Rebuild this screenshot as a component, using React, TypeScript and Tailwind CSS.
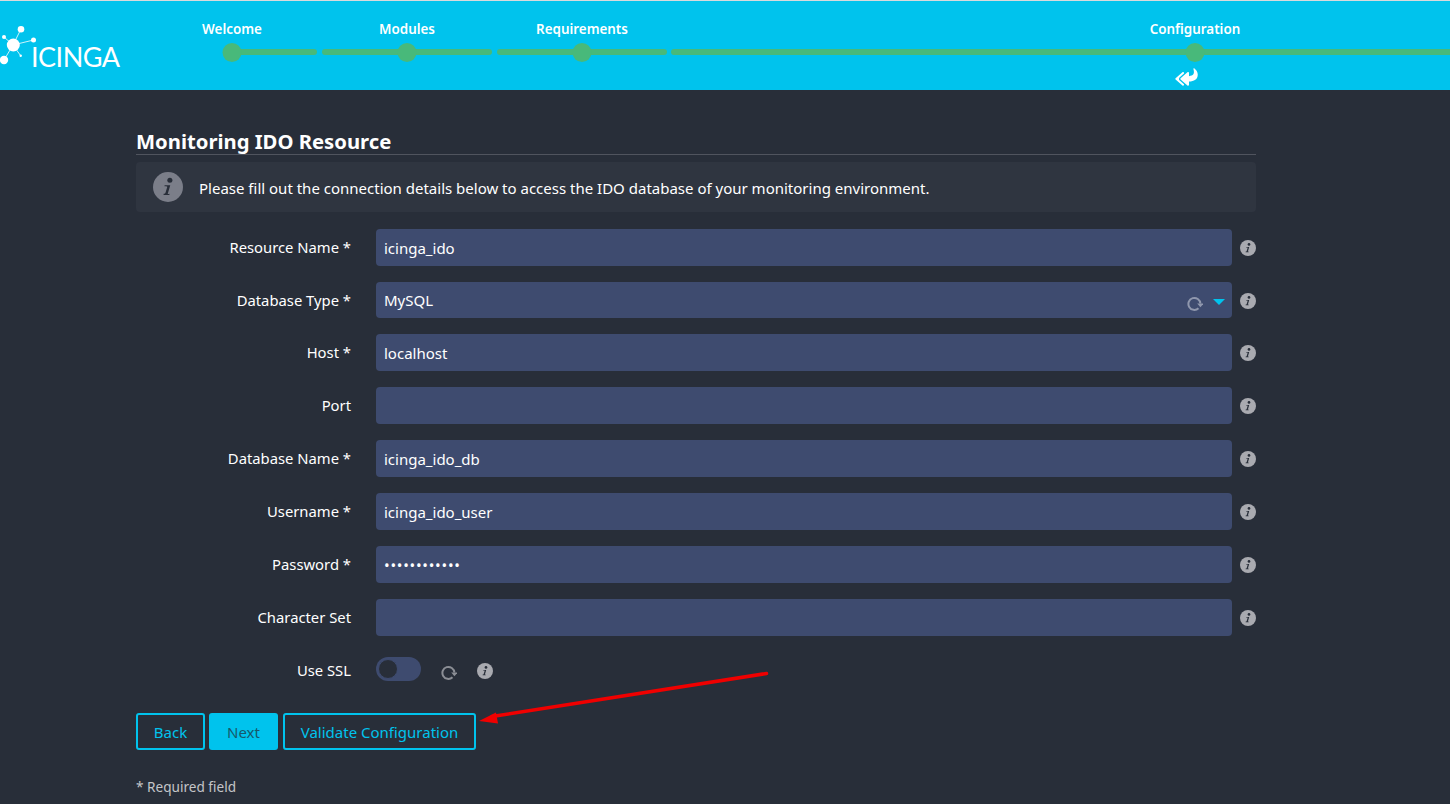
import { FaReplyAll } from "react-icons/fa"

const font = { fontFamily: '"Noto Sans", "Open Sans", sans-serif' }

function InfoIcon({ className = "w-4 h-4" }: { className?: string }) {
  return (
    <svg viewBox="0 0 16 16" className={className}>
      <circle cx="8" cy="8" r="8" fill="currentColor" />
      <circle cx="9" cy="4.4" r="1.35" fill="#282e39" />
      <path d="M6.2 7.1h3l-1.3 4.3c-.1.3.1.4.9.2l-.1.7H5.6l.1-.7c.6 0 .8-.1.9-.4l1-3.2c.1-.3-.1-.4-1.500-.4z" fill="#282e39" />
    </svg>
  )
}

function RefreshIcon({ className }: { className: string }) {
  return (
    <svg viewBox="0 0 16 16" className={className} fill="none">
      <path d="M11.500 12.300A6 6 0 1 1 13.400 7.500" stroke="currentColor" strokeWidth="2" />
      <path d="M10.200 7.500h6.400l-3.200 3.800z" fill="currentColor" />
    </svg>
  )
}

function Step({ label, width, first, children }: { label: string; width: string; first?: boolean; children?: React.ReactNode }) {
  return (
    <div className={`relative shrink-0 ${width}`}>
      <div className="h-[49px] pt-[20px] text-center text-[13.4px] leading-[18px] font-semibold text-white">{label}</div>
      <div className={`h-[6px] rounded-[3px] bg-[#48b97a] ${first ? "ml-[85px]" : ""}`} />
      <div className="absolute left-1/2 top-[43px] h-[19px] w-[19px] -translate-x-1/2 rounded-full bg-[#48b97a]" />
      {children}
    </div>
  )
}

function Logo() {
  return (
    <div className="relative w-[147px] shrink-0">
      <svg viewBox="0 0 36 42" className="absolute left-0 top-[25px] h-[42px] w-[36px]">
        <g stroke="#fff" strokeWidth="0.8">
          <path d="M13 19L21 3M13 19L4 11M13 19L33.500 14M13 19L4 34M13 19L20.500 29.500" />
        </g>
        <g fill="#fff">
          <circle cx="13.300" cy="19" r="6.500" />
          <circle cx="21" cy="3.300" r="3.300" />
          <circle cx="4" cy="11" r="2" />
          <circle cx="33.500" cy="14" r="2.500" />
          <circle cx="4" cy="34" r="4.200" />
          <circle cx="20.700" cy="29.700" r="1.200" />
        </g>
      </svg>
      <span
        className="absolute left-[31px] top-[39px] text-[27px] leading-[34px] font-normal tracking-[-0.5px] text-white"
        style={{ fontFamily: '"Lato", sans-serif' }}
      >
        ICINGA
      </span>
    </div>
  )
}

function Field({ label, value, type = "text", select }: { label: string; value?: string; type?: string; select?: boolean }) {
  return (
    <div className="flex items-center">
      <label className="w-[215px] shrink-0 text-right text-[14.8px] text-white">{label}</label>
      <div className={`relative ml-[25px] w-[856px] ${select ? "h-[36px]" : "h-[37px]"}`}>
        <input
          readOnly
          type={type}
          value={value ?? ""}
          className={`h-full w-full rounded-[4px] bg-[#3e4b6f] px-2 text-[15px] text-white outline-none ${type === "password" ? "tracking-[0.75px]" : ""}`}
        />
        {select && (
          <>
            <RefreshIcon className="absolute right-[29px] top-[14px] h-[16px] w-[16px] text-[#8f97ad]" />
            <div className="absolute right-[7px] top-[17px] h-0 w-0 border-x-[6px] border-t-[6px] border-x-transparent border-t-[#00c3ed]" />
          </>
        )}
      </div>
      <InfoIcon className={`ml-2 h-4 w-4 text-[#a9aab0] ${select ? "mt-[2px]" : ""}`} />
    </div>
  )
}

export default function App() {
  return (
    <div className="relative h-[804px] overflow-hidden bg-[#282e39]" style={font}>
      {/* Wizard header */}
      <header className="flex h-[90px] overflow-hidden border-t border-[#d8dadd] bg-[#00c3ed]">
        <Logo />
        <div className="-mt-px flex gap-[5px]">
          <Step label="Welcome" width="w-[170px]" first />
          <Step label="Modules" width="w-[170px]" />
          <Step label="Requirements" width="w-[170px]" />
          <Step label="Configuration" width="w-[1048px] -ml-px">
            <FaReplyAll className="absolute left-[504px] top-[67px] h-[20px] w-[23px] -scale-y-100 text-white" />
          </Step>
        </div>
      </header>

      {/* Form */}
      <main className="ml-[136px] w-[1120px] pt-[38px]">
        <h2 className="h-[27px] border-b border-[#50545e] text-[20.25px] leading-[26px] font-bold text-white">Monitoring IDO Resource</h2>
        <div className="mt-[7px] flex h-[50px] items-center rounded-[4px] bg-[#2f3540] pl-[17px] text-[15px] text-white">
          <InfoIcon className="h-[30px] w-[30px] text-[#7b7e89]" />
          <p className="ml-4 pt-[2px]">Please fill out the connection details below to access the IDO database of your monitoring environment.</p>
        </div>

        <div className="mt-[17px] flex flex-col gap-4">
          <Field label="Resource Name *" value="icinga_ido" />
          <Field label="Database Type *" value="MySQL" select />
          <Field label="Host *" value="localhost" />
          <Field label="Port" />
          <Field label="Database Name *" value="icinga_ido_db" />
          <Field label="Username *" value="icinga_ido_user" />
          <Field label="Password *" value="icinga_ido_p" type="password" />
          <Field label="Character Set" />
          <div className="flex h-[37px] items-center">
            <label className="w-[215px] shrink-0 text-right text-[14.8px] text-white">Use SSL</label>
            <div className="ml-[25px] -mt-[3px] flex h-6 w-[45px] items-center rounded-xl bg-[#3e4b6f] pl-[2px]">
              <div className="h-5 w-5 rounded-full border border-[#3e4b6f] bg-[#282e39]" />
            </div>
            <RefreshIcon className="ml-[20px] mt-[5px] h-[16px] w-[16px] text-[#8b8e95]" />
            <InfoIcon className="ml-[20px] h-4 w-4 text-[#a9aab0]" />
          </div>
        </div>

        <div className="mt-[24px] flex text-[15px]">
          <button className="h-[37px] w-[69px] rounded-[3px] border-2 border-[#00c3ed] pt-[2px] text-[#00c3ed]">Back</button>
          <button className="ml-1 h-[37px] w-[69px] rounded-[3px] bg-[#00c3ed] pt-[2px] text-[#17596b]">Next</button>
          <button className="ml-[5px] h-[37px] w-[193px] rounded-[3px] border-2 border-[#00c3ed] pt-[2px] text-[#00c3ed]">Validate Configuration</button>
        </div>

        <p className="mt-[27px] text-[13.6px] leading-5 text-[#c4c5c8]">* Required field</p>
      </main>

      {/* Annotation arrow */}
      <svg className="absolute left-[470px] top-[665px] h-[65px] w-[305px]" viewBox="0 0 305 65">
        <path d="M296.500 8.500L22 51.500" stroke="#f00000" strokeWidth="3.500" strokeLinecap="round" />
        <path d="M9 56L26 47.500L28 58.500z" fill="#f00000" />
      </svg>
    </div>
  )
}
